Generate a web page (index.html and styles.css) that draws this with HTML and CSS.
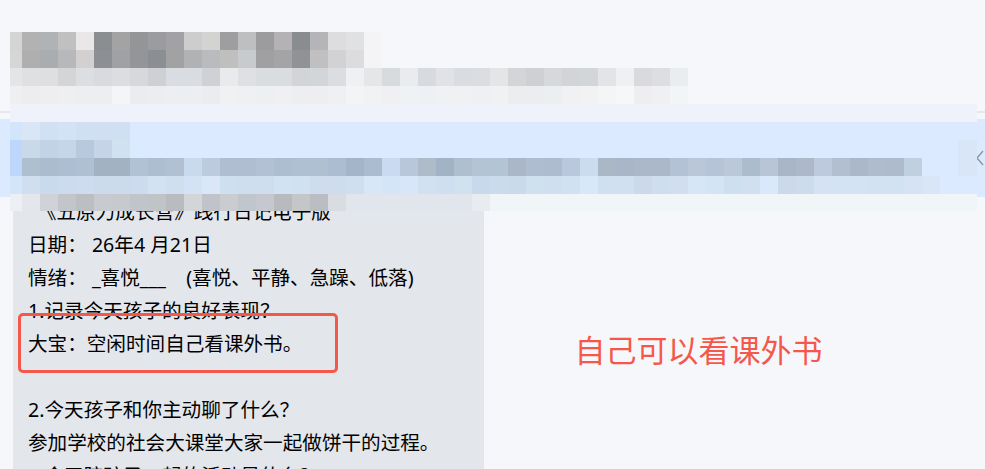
FILE: index.html
```html
<!DOCTYPE html>
<html lang="zh-CN">
<head>
<meta charset="utf-8">
<title>践行日记</title>
<link rel="stylesheet" href="styles.css">
</head>
<body>
<div class="page">
  <div class="head"></div>
  <div class="band">
    <svg class="chevron" width="8" height="16" viewBox="0 0 8 16"><path d="M7 1 1 8l6 7" fill="none" stroke="#8f959e" stroke-width="1.4"/></svg>
  </div>
  <div class="content">
    <div class="panel">
      <p class="line title">《五原力成长营》践行日记电子版</p>
      <p class="line">日期：&nbsp;26年4 月21日</p>
      <p class="line">情绪：&nbsp;_喜悦___&nbsp;&nbsp;&nbsp;&nbsp;(喜悦、平静、急躁、低落)</p>
      <p class="line">1.记录今天孩子的良好表现？</p>
      <p class="line">大宝：空闲时间自己看课外书。</p>
      <p class="line blank">&nbsp;</p>
      <p class="line">2.今天孩子和你主动聊了什么？</p>
      <p class="line">参加学校的社会大课堂大家一起做饼干的过程。</p>
      <p class="line">3.今天陪孩子一起的活动是什么？</p>
    </div>
    <div class="note"><span class="note-text">自己可以看课外书</span></div>
  </div>
  <div class="highlight"></div>
  <svg class="mosaic" width="985" height="469" viewBox="0 0 985 469" shape-rendering="crispEdges">
    <rect x="10" y="104" width="967" height="18" fill="#eff2fa"/>
    <rect x="10" y="122" width="967" height="72" fill="#dbeafe"/>
    <rect x="346" y="194" width="126" height="17" fill="#e1e5ec"/>
    <rect x="490" y="194" width="487" height="17" fill="#f0f5f8"/>
    <rect x="958" y="140" width="19" height="36" fill="#d8e6f8"/>
    <g class="row">
      <rect class="first" x="10" y="32" fill="#d4d4d5"/><rect x="22" y="32" fill="#b2b2b2"/><rect x="40" y="32" fill="#b0b3b6"/><rect x="58" y="32" fill="#c0c0c1"/><rect x="76" y="32" fill="#e9e7e7"/><rect x="94" y="32" fill="#8b8e91"/><rect x="112" y="32" fill="#a3a3a4"/><rect x="130" y="32" fill="#949597"/><rect x="148" y="32" fill="#9a9c9f"/><rect x="166" y="32" fill="#a2a2a4"/><rect x="184" y="32" fill="#cdcdce"/><rect x="202" y="32" fill="#d3d3d2"/><rect x="220" y="32" fill="#9e9ea1"/><rect x="238" y="32" fill="#bdbfc0"/><rect x="256" y="32" fill="#9c9c9f"/><rect x="274" y="32" fill="#b4b2b4"/><rect x="292" y="32" fill="#8a8d90"/><rect x="310" y="32" fill="#b5b5b8"/><rect x="328" y="32" fill="#dddddf"/><rect x="346" y="32" fill="#e0e1e2"/><rect x="364" y="32" fill="#f4f4f6"/>
      <rect class="first" x="10" y="50" fill="#d6d6d7"/><rect x="22" y="50" fill="#b0afaf"/><rect x="40" y="50" fill="#aaadb0"/><rect x="58" y="50" fill="#b7b8b9"/><rect x="76" y="50" fill="#d2d1cf"/><rect x="94" y="50" fill="#8c8f93"/><rect x="112" y="50" fill="#a0a1a4"/><rect x="130" y="50" fill="#949598"/><rect x="148" y="50" fill="#8b8e92"/><rect x="166" y="50" fill="#a2a2a2"/><rect x="184" y="50" fill="#b1b2b3"/><rect x="202" y="50" fill="#babbbe"/><rect x="220" y="50" fill="#bfbfbd"/><rect x="238" y="50" fill="#c8cbcd"/><rect x="256" y="50" fill="#a0a0a3"/><rect x="274" y="50" fill="#a4a4a7"/><rect x="292" y="50" fill="#919295"/><rect x="310" y="50" fill="#c1c0c0"/><rect x="328" y="50" fill="#d2d2d5"/><rect x="346" y="50" fill="#dcdcde"/><rect x="364" y="50" fill="#f4f4f6"/>
      <rect class="first" x="10" y="68" fill="#e5e5e7"/><rect x="22" y="68" fill="#dfe0e2"/><rect x="40" y="68" fill="#dfdfe1"/><rect x="58" y="68" fill="#d4d5d7"/><rect x="76" y="68" fill="#dcdee1"/><rect x="94" y="68" fill="#d9dade"/><rect x="112" y="68" fill="#dcdde0"/><rect x="130" y="68" fill="#d7d8db"/><rect x="148" y="68" fill="#cfd0d3"/><rect x="166" y="68" fill="#d9dce0"/><rect x="184" y="68" fill="#d9dce0"/><rect x="202" y="68" fill="#d0d1d5"/><rect x="220" y="68" fill="#e9eaec"/><rect x="238" y="68" fill="#dfe0e3"/><rect x="256" y="68" fill="#dadde0"/><rect x="274" y="68" fill="#dadde0"/><rect x="292" y="68" fill="#d2d4d7"/><rect x="310" y="68" fill="#d3d6d9"/><rect x="328" y="68" fill="#dcdde0"/><rect x="346" y="68" fill="#eff0f3"/><rect x="364" y="68" fill="#e5e6e8"/><rect x="382" y="68" fill="#d8dbdd"/><rect x="400" y="68" fill="#e9ebee"/><rect x="418" y="68" fill="#d7dade"/><rect x="436" y="68" fill="#e0e2e6"/><rect x="454" y="68" fill="#d9dce0"/><rect x="472" y="68" fill="#dcdde0"/><rect x="490" y="68" fill="#e3e5e7"/><rect x="508" y="68" fill="#d4d5d7"/><rect x="526" y="68" fill="#ced0d3"/><rect x="544" y="68" fill="#d6d8db"/><rect x="562" y="68" fill="#d2d4d7"/><rect x="580" y="68" fill="#d3d6d8"/><rect x="598" y="68" fill="#e2e4e7"/><rect x="616" y="68" fill="#eff0f2"/><rect x="634" y="68" fill="#d9dade"/><rect x="652" y="68" fill="#dcdee1"/><rect x="670" y="68" fill="#e9edef"/>
      <rect class="first" x="10" y="86" fill="#efeff1"/><rect x="22" y="86" fill="#ededef"/><rect x="40" y="86" fill="#eeeef0"/><rect x="58" y="86" fill="#eeeff1"/><rect x="76" y="86" fill="#edeef0"/><rect x="94" y="86" fill="#edeef0"/><rect x="112" y="86" fill="#f4f5f7"/><rect x="130" y="86" fill="#ebecef"/><rect x="148" y="86" fill="#ecedf0"/><rect x="166" y="86" fill="#eceef2"/><rect x="184" y="86" fill="#eceef2"/><rect x="202" y="86" fill="#ebecef"/><rect x="220" y="86" fill="#f0f1f3"/><rect x="238" y="86" fill="#eff0f2"/><rect x="256" y="86" fill="#eeeff1"/><rect x="274" y="86" fill="#f0f0f3"/><rect x="292" y="86" fill="#edeef0"/><rect x="310" y="86" fill="#eeeef1"/><rect x="328" y="86" fill="#eff0f2"/><rect x="346" y="86" fill="#f3f4f6"/><rect x="364" y="86" fill="#f1f2f4"/><rect x="382" y="86" fill="#f0f0f3"/><rect x="400" y="86" fill="#eff2f4"/><rect x="418" y="86" fill="#eef1f3"/><rect x="436" y="86" fill="#f0f1f3"/><rect x="454" y="86" fill="#f0f1f3"/><rect x="472" y="86" fill="#eff0f3"/><rect x="490" y="86" fill="#f0f1f3"/><rect x="508" y="86" fill="#ecedef"/><rect x="526" y="86" fill="#ecedf0"/><rect x="544" y="86" fill="#ebefef"/><rect x="562" y="86" fill="#f1f1f3"/><rect x="580" y="86" fill="#f2f2f3"/><rect x="598" y="86" fill="#f4f5f7"/><rect x="616" y="86" fill="#f6f7f9"/><rect x="634" y="86" fill="#eeeef1"/><rect x="652" y="86" fill="#f0f0f3"/><rect x="670" y="86" fill="#f2f5f6"/>
      <rect class="first" x="10" y="122" fill="#d3e5fb"/><rect x="22" y="122" fill="#d8e6f6"/><rect x="40" y="122" fill="#d1e1f3"/><rect x="58" y="122" fill="#d3e2f4"/><rect x="76" y="122" fill="#d0e0f2"/><rect x="94" y="122" fill="#d0e0f2"/><rect x="112" y="122" fill="#d0e0f2"/>
      <rect class="first" x="10" y="140" fill="#bcd7fb"/><rect x="22" y="140" fill="#c9d9ea"/><rect x="40" y="140" fill="#c2d3e6"/><rect x="58" y="140" fill="#c6d6e9"/><rect x="76" y="140" fill="#b9c9dd"/><rect x="94" y="140" fill="#c5d4e6"/><rect x="112" y="140" fill="#d0e1f0"/>
      <rect class="first" x="10" y="158" fill="#bcd7fb"/><rect x="22" y="158" fill="#aebfcf"/><rect x="40" y="158" fill="#abbccf"/><rect x="58" y="158" fill="#aebed2"/><rect x="76" y="158" fill="#afc0d3"/><rect x="94" y="158" fill="#a3b2c2"/><rect x="112" y="158" fill="#a3b2c2"/><rect x="130" y="158" fill="#b2c2d5"/><rect x="148" y="158" fill="#aebed1"/><rect x="166" y="158" fill="#b1c0d3"/><rect x="184" y="158" fill="#c9daee"/><rect x="202" y="158" fill="#bccbde"/><rect x="220" y="158" fill="#afbfd1"/><rect x="238" y="158" fill="#afbfd1"/><rect x="256" y="158" fill="#b2c2d4"/><rect x="274" y="158" fill="#aebed1"/><rect x="292" y="158" fill="#b0c0d3"/><rect x="310" y="158" fill="#b0c0d3"/><rect x="328" y="158" fill="#adbdd1"/><rect x="346" y="158" fill="#a5b4c8"/><rect x="364" y="158" fill="#acbcd0"/><rect x="382" y="158" fill="#cadbf1"/><rect x="400" y="158" fill="#b8c8da"/><rect x="418" y="158" fill="#aebbc8"/><rect x="436" y="158" fill="#a2b3c5"/><rect x="454" y="158" fill="#afbfd0"/><rect x="472" y="158" fill="#b5c4d5"/><rect x="490" y="158" fill="#b4c4d7"/><rect x="508" y="158" fill="#a9b7c9"/><rect x="526" y="158" fill="#aebdd0"/><rect x="544" y="158" fill="#adbcce"/><rect x="562" y="158" fill="#b9c8dc"/><rect x="580" y="158" fill="#ccdcef"/><rect x="598" y="158" fill="#a9b7c7"/><rect x="616" y="158" fill="#a8b6c8"/><rect x="634" y="158" fill="#abb8c9"/><rect x="652" y="158" fill="#abb8ca"/><rect x="670" y="158" fill="#b3c2d4"/><rect x="688" y="158" fill="#b9c7d9"/><rect x="706" y="158" fill="#b5c4d6"/><rect x="724" y="158" fill="#bac8da"/><rect x="742" y="158" fill="#adbccd"/><rect x="760" y="158" fill="#b7c5d7"/><rect x="778" y="158" fill="#a9b6c7"/><rect x="796" y="158" fill="#adb8c9"/><rect x="814" y="158" fill="#bdcadd"/><rect x="832" y="158" fill="#b1bfd0"/><rect x="850" y="158" fill="#abb8c9"/><rect x="868" y="158" fill="#afbccd"/><rect x="886" y="158" fill="#aebbcc"/><rect x="904" y="158" fill="#c0d0e0"/>
      <rect class="first" x="10" y="176" fill="#d3e5fb"/><rect x="22" y="176" fill="#cfdff0"/><rect x="40" y="176" fill="#c9daec"/><rect x="58" y="176" fill="#ccdcee"/><rect x="76" y="176" fill="#cdddef"/><rect x="94" y="176" fill="#cbdbec"/><rect x="112" y="176" fill="#cbdbec"/><rect x="130" y="176" fill="#ccdcee"/><rect x="148" y="176" fill="#d3e2f2"/><rect x="166" y="176" fill="#d0dfef"/><rect x="184" y="176" fill="#d3e3f5"/><rect x="202" y="176" fill="#d9e7f9"/><rect x="220" y="176" fill="#cde0f0"/><rect x="238" y="176" fill="#cfdeef"/><rect x="256" y="176" fill="#cfdeef"/><rect x="274" y="176" fill="#d1e2f2"/><rect x="292" y="176" fill="#d1e0f2"/><rect x="310" y="176" fill="#cfdcee"/><rect x="328" y="176" fill="#cfdcee"/><rect x="346" y="176" fill="#cfdfef"/><rect x="364" y="176" fill="#d8e7f8"/><rect x="382" y="176" fill="#d5e5f8"/><rect x="400" y="176" fill="#d7e7f9"/><rect x="418" y="176" fill="#d2e1f2"/><rect x="436" y="176" fill="#cfdff1"/><rect x="454" y="176" fill="#d0e1f0"/><rect x="472" y="176" fill="#c9d9ec"/><rect x="490" y="176" fill="#c9dbec"/><rect x="508" y="176" fill="#c9daea"/><rect x="526" y="176" fill="#cfe0ef"/><rect x="544" y="176" fill="#cfdff0"/><rect x="562" y="176" fill="#d0e1f2"/><rect x="580" y="176" fill="#d7e8fa"/><rect x="598" y="176" fill="#d0e0f0"/><rect x="616" y="176" fill="#d0e0f0"/><rect x="634" y="176" fill="#cbd9ea"/><rect x="652" y="176" fill="#cfdeee"/><rect x="670" y="176" fill="#d0deef"/><rect x="688" y="176" fill="#d6e6f6"/><rect x="706" y="176" fill="#d3e4f4"/><rect x="724" y="176" fill="#cde0f0"/><rect x="742" y="176" fill="#d0e0f0"/><rect x="760" y="176" fill="#d9e8fb"/><rect x="778" y="176" fill="#cbd9ea"/><rect x="796" y="176" fill="#ccdcea"/><rect x="814" y="176" fill="#d4e2f3"/><rect x="832" y="176" fill="#d3e3f3"/><rect x="850" y="176" fill="#d3e3f3"/><rect x="868" y="176" fill="#d3e2f3"/><rect x="886" y="176" fill="#d3e2f3"/><rect x="904" y="176" fill="#d5e3f4"/><rect x="922" y="176" fill="#d8e6f8"/>
    </g>
    <g class="row short">
      <rect class="first" x="10" y="194" fill="#eceff4"/><rect x="22" y="194" fill="#e3e6ea"/><rect x="40" y="194" fill="#cfd3d8"/><rect x="58" y="194" fill="#c2c5ca"/><rect x="76" y="194" fill="#bcbfc1"/><rect x="94" y="194" fill="#c7cbd0"/><rect x="112" y="194" fill="#c7cacd"/><rect x="130" y="194" fill="#bfc5cb"/><rect x="148" y="194" fill="#c1c4c7"/><rect x="166" y="194" fill="#b8bcc0"/><rect x="184" y="194" fill="#d2d6d8"/><rect x="202" y="194" fill="#c0c3c9"/><rect x="220" y="194" fill="#cbcccf"/><rect x="238" y="194" fill="#bfc6cc"/><rect x="256" y="194" fill="#c5c8ce"/><rect x="274" y="194" fill="#b7bbbd"/><rect x="292" y="194" fill="#c4c6c8"/><rect x="310" y="194" fill="#babdc1"/><rect x="328" y="194" fill="#d9dce1"/><rect x="472" y="194" fill="#e8ebef"/>
    </g>
  </svg>
</div>
</body>
</html>
```

FILE: styles.css
```css
html, body {
  margin: 0;
  padding: 0;
}

body {
  background: #f5f7fb;
  font-family: "Noto Sans", "Noto Sans CJK SC", sans-serif;
}

.page {
  position: relative;
  display: flex;
  flex-direction: column;
  height: 469px;
  overflow: hidden;
  background: #f5f7fb;
}

.head {
  height: 111px;
  flex: none;
  border-bottom: 2px solid #e5e7eb;
}

.band {
  flex: none;
  display: flex;
  justify-content: flex-end;
  align-items: center;
  height: 78px;
  margin-top: 6px;
  background: #dbeafe;
}

.chevron {
  margin-right: 1px;
}

.content {
  display: flex;
  flex: 1;
  min-height: 0;
}

.panel {
  flex: none;
  box-sizing: border-box;
  width: 471px;
  margin-left: 13px;
  padding-left: 15px;
  background: #e3e6eb;
  color: #000;
  font-size: 19.6px;
  line-height: 33px;
}

.line {
  margin: 0;
  white-space: pre;
}

.title {
  margin-top: -2px;
  padding-left: 9px;
}

.note {
  flex: 1;
  display: flex;
  justify-content: center;
  padding-top: 130px;
  padding-right: 72px;
}

.note-text {
  color: #f5584a;
  font-size: 31px;
  line-height: 46px;
  height: 46px;
}

.highlight {
  position: absolute;
  left: 18px;
  top: 313px;
  width: 320px;
  height: 60px;
  box-sizing: border-box;
  border: 3px solid #f5584a;
  border-radius: 5px;
}

.mosaic {
  position: absolute;
  left: 0;
  top: 0;
}

.row rect {
  width: 18px;
  height: 18px;
}

.row rect.first {
  width: 12px;
}

.short rect {
  height: 17px;
}
```
